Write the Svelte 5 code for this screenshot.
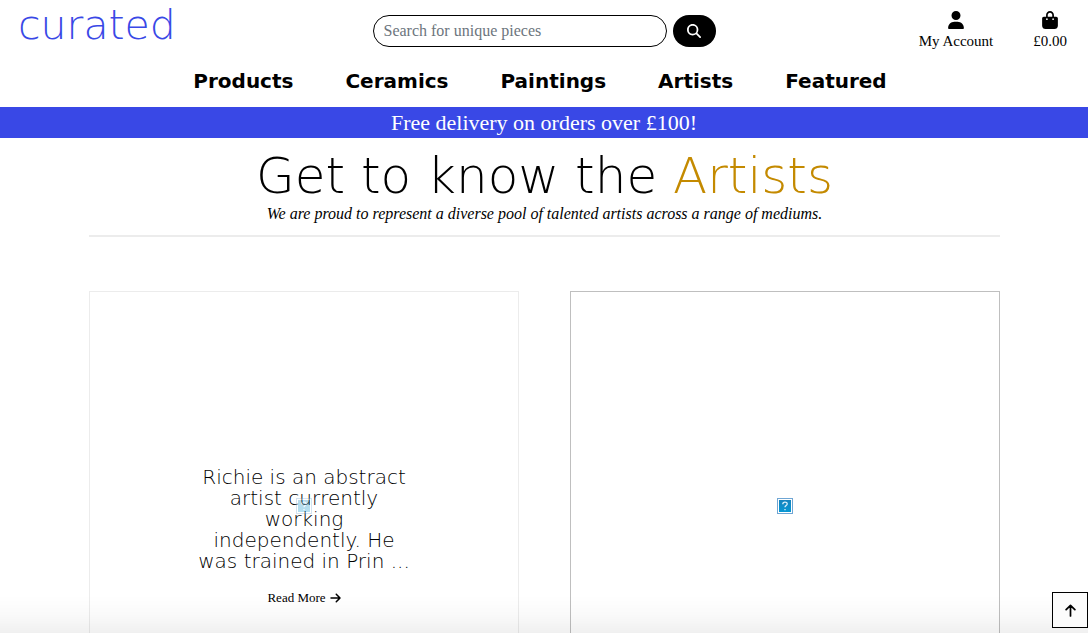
<script>
  const categories = ['Products', 'Ceramics', 'Paintings', 'Artists', 'Featured'];
</script>

<div class="page">
  <header>
    <div class="top">
      <a class="logo" href="#home">curated</a>
      <form class="search" onsubmit={(e) => e.preventDefault()}>
        <input type="search" aria-label="Search for unique pieces" placeholder="Search for unique pieces" />
        <button type="submit" aria-label="Search">
          <svg width="14" height="14" viewBox="0 0 512 512" fill="currentColor"><path d="M416 208c0 45.900-14.900 88.300-40 122.700L502.600 457.400c12.500 12.500 12.500 32.800 0 45.300s-32.800 12.500-45.300 0L330.700 376c-34.400 25.200-76.800 40-122.700 40C93.100 416 0 322.900 0 208S93.100 0 208 0S416 93.100 416 208zM208 352a144 144 0 1 0 0-288 144 144 0 1 0 0 288z" /></svg>
        </button>
      </form>
      <div class="links">
        <a href="#account">
          <svg width="16" height="18" viewBox="0 0 448 512" fill="currentColor"><path d="M224 256A128 128 0 1 0 224 0a128 128 0 1 0 0 256zm-45.700 48C79.800 304 0 383.800 0 482.300C0 498.700 13.300 512 29.700 512H418.300c16.400 0 29.700-13.300 29.700-29.700C448 383.800 368.200 304 269.700 304H178.300z" /></svg>
          <span>My Account</span>
        </a>
        <a href="#bag">
          <svg width="16" height="18" viewBox="0 0 448 512" fill="currentColor"><path d="M112 112C112 50.100 162.100 0 224 0s112 50.100 112 112v48h64c26.500 0 48 21.500 48 48V416c0 53-43 96-96 96H96c-53 0-96-43-96-96V208c0-26.500 21.500-48 48-48h64V112zm48 48H288V112c0-35.300-28.700-64-64-64s-64 28.700-64 64v48zm-24 96a24 24 0 1 0 0-48 24 24 0 1 0 0 48zm200-24a24 24 0 1 0 -48 0 24 24 0 1 0 48 0z" /></svg>
          <span>£0.00</span>
        </a>
      </div>
    </div>
    <nav>
      {#each categories as category}
        <a href="#{category.toLowerCase()}">{category}</a>
      {/each}
    </nav>
    <div class="banner">Free delivery on orders over £100!</div>
  </header>

  <main>
    <h1>Get to know the <span>Artists</span></h1>
    <p class="intro">We are proud to represent a diverse pool of talented artists across a range of mediums.</p>
    <hr />
    <div class="artists">
      <article>
        <div class="photo faded">{@render missing()}</div>
        <div class="about">
          <p>Richie is an abstract artist currently working independently. He was trained in Prin ...</p>
          <a href="#richie">
            Read More
            <svg width="11" height="12" viewBox="0 0 448 512" fill="currentColor"><path d="M438.600 278.600c12.500-12.500 12.500-32.800 0-45.300l-160-160c-12.500-12.500-32.800-12.500-45.300 0s-12.500 32.800 0 45.300L338.800 224H32c-17.700 0-32 14.300-32 32s14.300 32 32 32H338.700L233.400 393.400c-12.500 12.500-12.500 32.800 0 45.300s32.800 12.500 45.300 0l160-160z" /></svg>
          </a>
        </div>
      </article>
      <article>
        <div class="photo">{@render missing()}</div>
      </article>
    </div>
  </main>

  <div class="shade"></div>
  <button class="to-top" aria-label="Back to top" onclick={() => window.scrollTo(0, 0)}>
    <svg width="11" height="13" viewBox="0 0 384 448" fill="none" stroke="currentColor" stroke-width="60" stroke-linecap="round" stroke-linejoin="round"><path d="M192 415V48M40 195L192 43l152 152" /></svg>
  </button>
</div>

{#snippet missing()}
  <svg width="16" height="16" viewBox="0 0 16 16" aria-hidden="true">
    <defs>
      <linearGradient id="tile" x1="0" y1="0" x2="0" y2="1">
        <stop offset="0" stop-color="#1583bd" />
        <stop offset="1" stop-color="#0797d3" />
      </linearGradient>
    </defs>
    <rect x=".5" y=".5" width="15" height="15" fill="#fff" stroke="#6fa6d4" />
    <rect x="2" y="2" width="12" height="12" fill="url(#tile)" />
    <path d="M5.800 6.200C5.800 3.500 10.200 3.500 10.200 6C10.200 7.600 8 7.500 8 9.300M8 11v1.200" fill="none" stroke="#d9effa" stroke-width="1.300" />
  </svg>
{/snippet}

<style>
  :global(body) {
    margin: 0;
    background: #fff;
  }
  .page {
    color: #000;
    font: 16px/24px 'Liberation Serif', serif;
  }
  a {
    color: inherit;
    text-decoration: none;
  }
  svg {
    display: block;
  }
  .top {
    display: grid;
    grid-template-columns: 1fr 343px 1fr;
    align-items: start;
    padding: 0 18px;
    height: 62px;
  }
  .logo,
  nav,
  h1,
  .about p {
    font-family: 'DejaVu Sans', sans-serif;
  }
  .logo {
    color: #3948e6;
    font-size: 41px;
    line-height: 50px;
    font-weight: 200;
  }
  .search {
    display: flex;
    gap: 6px;
    padding-top: 15px;
  }
  .search input {
    flex: 1;
    min-width: 0;
    height: 32px;
    box-sizing: border-box;
    padding: 0 10px;
    border: 1px solid #000;
    border-radius: 16px;
    background: #fff;
    font: inherit;
  }
  .search input::placeholder {
    color: #6c757d;
  }
  .search button {
    display: grid;
    place-items: center;
    width: 43px;
    height: 32px;
    padding: 0;
    border: 0;
    border-radius: 16px;
    background: #000;
    color: #fff;
  }
  .links {
    display: flex;
    justify-content: flex-end;
    gap: 40px;
    padding: 11px 3px 0 0;
    font-size: 15px;
  }
  .links a {
    display: flex;
    flex-direction: column;
    align-items: center;
  }
  nav {
    display: flex;
    justify-content: center;
    gap: 52px;
    padding: 7px 0 14px;
    margin-right: 8px;
    font-size: 20px;
    font-weight: 700;
  }
  .banner {
    background: #3948e6;
    color: #fff;
    text-align: center;
    font-size: 22px;
    line-height: 31px;
  }
  main {
    padding: 14px 88px 48px 89px;
  }
  h1 {
    margin: 0 0 2px;
    text-align: center;
    font-size: 50px;
    line-height: 48px;
    font-weight: 200;
  }
  h1 span {
    color: #c48a00;
  }
  .intro {
    margin: 0;
    text-align: center;
    font-style: italic;
  }
  hr {
    height: 2px;
    margin: 9px 0 54px;
    border: 0;
    background: #ececec;
  }
  .artists {
    display: grid;
    grid-template-columns: 1fr 1fr;
    gap: 51px;
  }
  article {
    display: grid;
    aspect-ratio: 1;
  }
  .photo,
  .about {
    grid-area: 1 / 1;
  }
  .photo {
    display: grid;
    place-items: center;
    border: 1px solid #bfbfbf;
  }
  .faded {
    opacity: 0.3;
  }
  .about {
    display: flex;
    flex-direction: column;
    align-items: center;
    gap: 14px;
    padding-top: 176px;
    text-align: center;
  }
  .about p {
    width: 50%;
    margin: 0;
    font-size: 20px;
    line-height: 21px;
    font-weight: 200;
  }
  .about a {
    display: flex;
    align-items: center;
    gap: 4px;
    font-size: 13px;
  }
  .shade {
    position: fixed;
    inset: auto 0 0;
    height: 38px;
    background: linear-gradient(transparent, rgba(0, 0, 0, 0.02) 50%, rgba(0, 0, 0, 0.06));
    pointer-events: none;
  }
  .to-top {
    position: fixed;
    right: 0;
    bottom: 5px;
    display: grid;
    place-items: center;
    width: 36px;
    height: 36px;
    padding: 0;
    border: 1px solid #000;
    background: #fcfcfc;
    color: #000;
  }
</style>
